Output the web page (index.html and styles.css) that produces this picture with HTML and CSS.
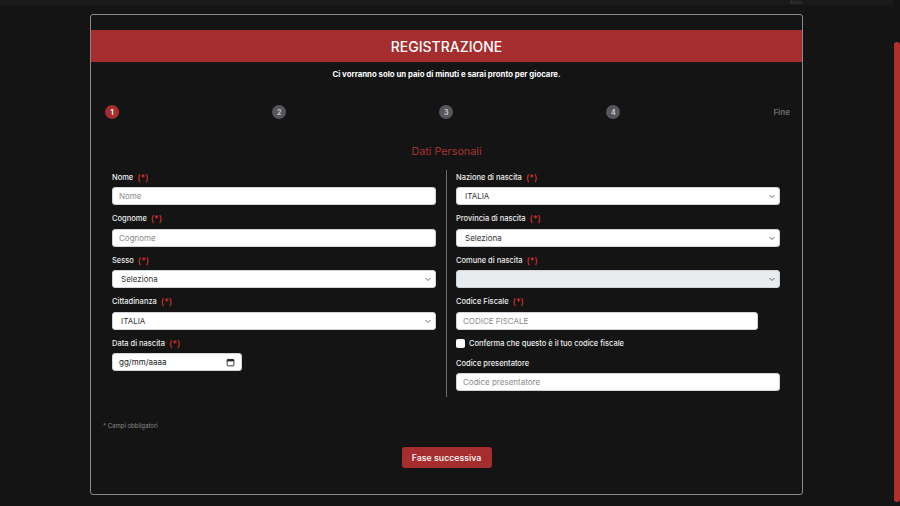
FILE: index.html
```html
<!DOCTYPE html>
<html lang="it">
<head>
    <meta charset="UTF-8">
    <meta name="viewport" content="width=device-width, initial-scale=1.0">
    <title>Registrazione</title>
    <link rel="stylesheet" href="styles.css">
</head>
<body>
<div class="page">
    <div class="viewport">
        <!-- barra superiore (scrollata fuori vista) -->
        <div class="topbar"><span class="help">Aiuto</span></div>

        <div class="modal">
            <div class="modal-header">
                <h1>REGISTRAZIONE</h1>
            </div>
            <div class="modal-body">
                <p class="intro">Ci vorranno solo un paio di minuti e sarai pronto per giocare.</p>

                <div class="steps">
                    <span class="step active">1</span>
                    <span class="step">2</span>
                    <span class="step">3</span>
                    <span class="step">4</span>
                    <span class="step-end">Fine</span>
                </div>

                <h2 class="section-title">Dati Personali</h2>

                <form class="form-grid">
                    <div class="col col-left">
                        <div class="form-group">
                            <label>Nome <span class="req">(*)</span></label>
                            <input type="text" placeholder="Nome">
                        </div>
                        <div class="form-group">
                            <label>Cognome <span class="req">(*)</span></label>
                            <input type="text" placeholder="Cognome">
                        </div>
                        <div class="form-group">
                            <label>Sesso <span class="req">(*)</span></label>
                            <select><option>Seleziona</option></select>
                        </div>
                        <div class="form-group">
                            <label>Cittadinanza <span class="req">(*)</span></label>
                            <select><option>ITALIA</option></select>
                        </div>
                        <div class="form-group">
                            <label>Data di nascita <span class="req">(*)</span></label>
                            <div class="date-field">
                                <span>gg/mm/aaaa</span>
                                <svg width="9" height="9" viewBox="0 0 16 16">
                                    <rect x="2" y="2.5" width="12" height="11.5" rx="1.5" fill="none" stroke="#222" stroke-width="1.6"/>
                                    <rect x="2" y="2.5" width="12" height="3.5" fill="#222"/>
                                </svg>
                            </div>
                        </div>
                    </div>

                    <div class="col col-right">
                        <div class="form-group">
                            <label>Nazione di nascita <span class="req">(*)</span></label>
                            <select><option>ITALIA</option></select>
                        </div>
                        <div class="form-group">
                            <label>Provincia di nascita <span class="req">(*)</span></label>
                            <select><option>Seleziona</option></select>
                        </div>
                        <div class="form-group">
                            <label>Comune di nascita <span class="req">(*)</span></label>
                            <select disabled><option></option></select>
                        </div>
                        <div class="form-group">
                            <label>Codice Fiscale <span class="req">(*)</span></label>
                            <input type="text" class="cf-input" placeholder="CODICE FISCALE">
                        </div>
                        <label class="check-row"><input type="checkbox"> Conferma che questo è il tuo codice fiscale</label>
                        <div class="form-group">
                            <label>Codice presentatore</label>
                            <input type="text" placeholder="Codice presentatore">
                        </div>
                    </div>
                </form>

                <p class="required-note">* Campi obbligatori</p>

                <div class="actions">
                    <button type="button" class="next-button">Fase successiva</button>
                </div>
            </div>
        </div>
    </div>

    <!-- scrollbar rossa -->
    <div class="scroll-rail"><div class="scroll-thumb"></div></div>
</div>
</body>
</html>
```

FILE: styles.css
```css
body {
    margin: 0;
    background-color: #141414;
    font-family: "Inter", "Liberation Sans", sans-serif;
    color: #eee;
    height: 506px;
    overflow: hidden;
}
.page {
    display: flex;
    height: 506px;
}
.viewport {
    flex: 1;
}
.topbar {
    height: 5px;
    background-color: #1a1a1a;
    display: flex;
    justify-content: flex-end;
    padding-right: 91px;
}
.help {
    font-size: 5px;
    line-height: 5px;
    color: #444;
}
.modal {
    width: 711px;
    margin: 9px auto 0;
    border: 1px solid #8a8a8a;
    border-radius: 3px;
    padding-top: 15px;
    padding-bottom: 26px;
    background-color: #141414;
}
.modal-header {
    background-color: #a52d2d;
    height: 32px;
    display: flex;
    align-items: center;
    justify-content: center;
}
.modal-header h1 {
    margin: 0;
    font-size: 14px;
    font-weight: 500;
    color: #fff;
}
.modal-body {
    padding: 0 12px;
}
.intro {
    margin: 6px 0 0;
    text-align: center;
    font-size: 7.8px;
    line-height: 12px;
    font-weight: 700;
    color: #fff;
}
.steps {
    display: flex;
    justify-content: space-between;
    align-items: center;
    margin: 25px 0 0 2px;
    height: 14px;
}
.step {
    width: 14px;
    height: 14px;
    border-radius: 50%;
    background-color: #56575a;
    color: #c8c8c8;
    font-size: 7px;
    font-weight: 700;
    display: flex;
    align-items: center;
    justify-content: center;
}
.step.active {
    background-color: #a52d2d;
    color: #fff;
}
.step-end {
    font-size: 8px;
    font-weight: 700;
    color: #666;
}
.section-title {
    margin: 25px 0 0;
    text-align: center;
    font-size: 10.8px;
    line-height: 16px;
    font-weight: 400;
    color: #a83232;
}
.form-grid {
    display: grid;
    grid-template-columns: 335px 1fr;
    align-items: start;
    margin-top: 10px;
    padding-left: 9px;
}
.col-left {
    border-right: 1px solid #6a6a6a;
    padding: 1px 10px 26px 0;
}
.col-right {
    padding: 1px 10px 0 9px;
}
.form-group {
    margin-bottom: 7.5px;
}
.form-group:last-child {
    margin-bottom: 0;
}
.form-group label {
    display: flex;
    align-items: center;
    height: 12px;
    font-size: 7.5px;
    font-weight: 500;
    color: #eee;
    margin-bottom: 4px;
}
.req {
    color: #d8322e;
    font-size: 9px;
    margin-left: 4px;
}
input[type="text"], select, .date-field {
    display: block;
    width: 100%;
    height: 18px;
    box-sizing: border-box;
    border: 1px solid #ced4da;
    border-radius: 3px;
    background-color: #fff;
    font-family: inherit;
    font-size: 8px;
    color: #333;
    padding: 0 6px;
    margin: 0;
    outline: none;
}
input[type="text"]::placeholder {
    color: #8a8a8a;
}
select {
    appearance: none;
    -webkit-appearance: none;
    padding-left: 8px;
    background-image: url("data:image/svg+xml,%3Csvg xmlns='http://www.w3.org/2000/svg' width='8' height='8' viewBox='0 0 8 8'%3E%3Cpath d='M1.5 3l2.5 2.5L6.5 3' fill='none' stroke='%23555' stroke-width='0.9'/%3E%3C/svg%3E");
    background-repeat: no-repeat;
    background-position: right 3px center;
}
select:disabled {
    background-color: #e9ecef;
    opacity: 1;
}
.cf-input {
    width: 302px !important;
}
.date-field {
    width: 130px;
    display: flex;
    align-items: center;
    justify-content: space-between;
    color: #222;
    padding: 0 6px 0 6px;
}
.check-row {
    display: flex;
    align-items: center;
    height: 12px;
    margin: 6px 0 8px;
    font-size: 7.5px;
    font-weight: 500;
    color: #eee;
}
.check-row input {
    width: 9px;
    height: 9px;
    margin: 0 4px 0 0;
    appearance: none;
    -webkit-appearance: none;
    background-color: #fff;
    border-radius: 2px;
}
.required-note {
    margin: 25px 0 0;
    font-size: 6px;
    line-height: 8px;
    color: #8a8a8a;
}
.actions {
    display: flex;
    justify-content: center;
    margin-top: 17px;
}
.next-button {
    width: 90px;
    height: 21px;
    border: none;
    border-radius: 3px;
    background-color: #a52d2d;
    color: #fff;
    font-family: inherit;
    font-size: 8.8px;
    font-weight: 500;
    padding: 0;
}
.scroll-rail {
    width: 7px;
    background-color: #141414;
}
.scroll-thumb {
    margin: 42px 0 0 1px;
    height: 460px;
    border-radius: 3px;
    background-color: #b03030;
}
```
